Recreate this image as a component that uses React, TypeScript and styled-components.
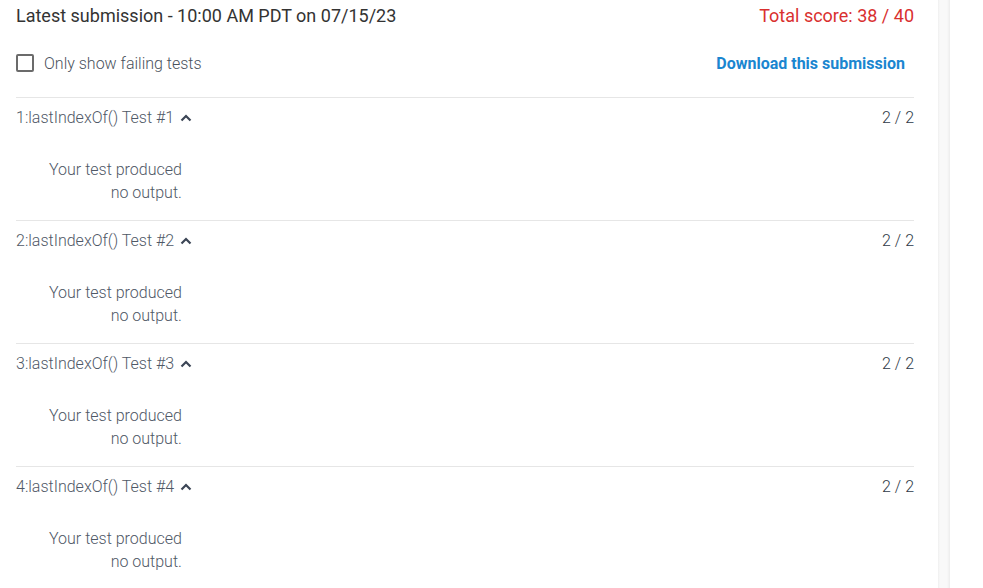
import styled, { createGlobalStyle } from 'styled-components';

const GlobalStyle = createGlobalStyle`
  html, body {
    margin: 0;
    padding: 0;
    background: #fff;
    font-family: Roboto, "Noto Sans", Arial, sans-serif;
  }
`;

const Page = styled.div`
  display: flex;
  height: 588px;
  overflow: hidden;
`;

const Main = styled.div`
  width: 938px;
  flex-shrink: 0;
  box-sizing: border-box;
  padding: 0 24px 0 16px;
`;

const Divider = styled.div`
  width: 12px;
  flex-shrink: 0;
  background: linear-gradient(to right, #efefef 0, #f9f9f9 2px, #f9f9f9 9px, #ededed 12px);
`;

const Header = styled.div`
  display: flex;
  justify-content: space-between;
  align-items: baseline;
  height: 35px;
  padding-top: 5px;
  box-sizing: border-box;
`;

const Title = styled.div`
  font-size: 18px;
  color: #333;
`;

const Total = styled.div`
  font-size: 18px;
  color: #d9302f;
`;

const Controls = styled.div`
  display: flex;
  justify-content: space-between;
  align-items: center;
  height: 62px;
  padding-bottom: 6px;
  box-sizing: border-box;
`;

const CheckLabel = styled.label`
  display: flex;
  align-items: center;
  gap: 10px;
  font-size: 16px;
  font-weight: 300;
  color: #4a525c;
  cursor: pointer;
`;

const Box = styled.span`
  width: 18px;
  height: 18px;
  box-sizing: border-box;
  border: 2px solid #6b6b6b;
  border-radius: 2px;
`;

const DownloadLink = styled.a`
  font-size: 16px;
  font-weight: 700;
  color: #1a86d0;
  text-decoration: none;
  margin-right: 9px;
`;

const TestRow = styled.div`
  border-top: 1px solid #e6e6e6;
  height: 123px;
  box-sizing: border-box;
`;

const TestHead = styled.div`
  display: flex;
  justify-content: space-between;
  align-items: center;
  height: 39px;
  font-size: 16px;
  font-weight: 300;
  color: #4f5866;
`;

const TestName = styled.div`
  display: flex;
  align-items: center;
  gap: 6px;
`;

const Score = styled.div`
  color: #2f3947;
`;

const Output = styled.div`
  margin-left: 33px;
  margin-top: 21px;
  width: fit-content;
  text-align: right;
  font-size: 16px;
  font-weight: 300;
  line-height: 23px;
  color: #4f5866;
`;

const Chevron = () => (
  <svg width="12" height="8" viewBox="0 0 12 8">
    <path d="M1.5 6.5 L6 2 L10.5 6.5" fill="none" stroke="#3c4656" strokeWidth="2.2" />
  </svg>
);

const tests = [1, 2, 3, 4];

export default function App() {
  return (
    <>
      <GlobalStyle />
      <Page>
        <Main>
          <Header>
            <Title>Latest submission - 10:00 AM PDT on 07/15/23</Title>
            <Total>Total score: 38 / 40</Total>
          </Header>
          <Controls>
            <CheckLabel>
              <Box />
              Only show failing tests
            </CheckLabel>
            <DownloadLink href="#">Download this submission</DownloadLink>
          </Controls>
          {tests.map((n) => (
            <TestRow key={n}>
              <TestHead>
                <TestName>
                  {n}:lastIndexOf() Test #{n}
                  <Chevron />
                </TestName>
                <Score>2 / 2</Score>
              </TestHead>
              <Output>
                Your test produced
                <br />
                no output.
              </Output>
            </TestRow>
          ))}
        </Main>
        <Divider />
      </Page>
    </>
  );
}
